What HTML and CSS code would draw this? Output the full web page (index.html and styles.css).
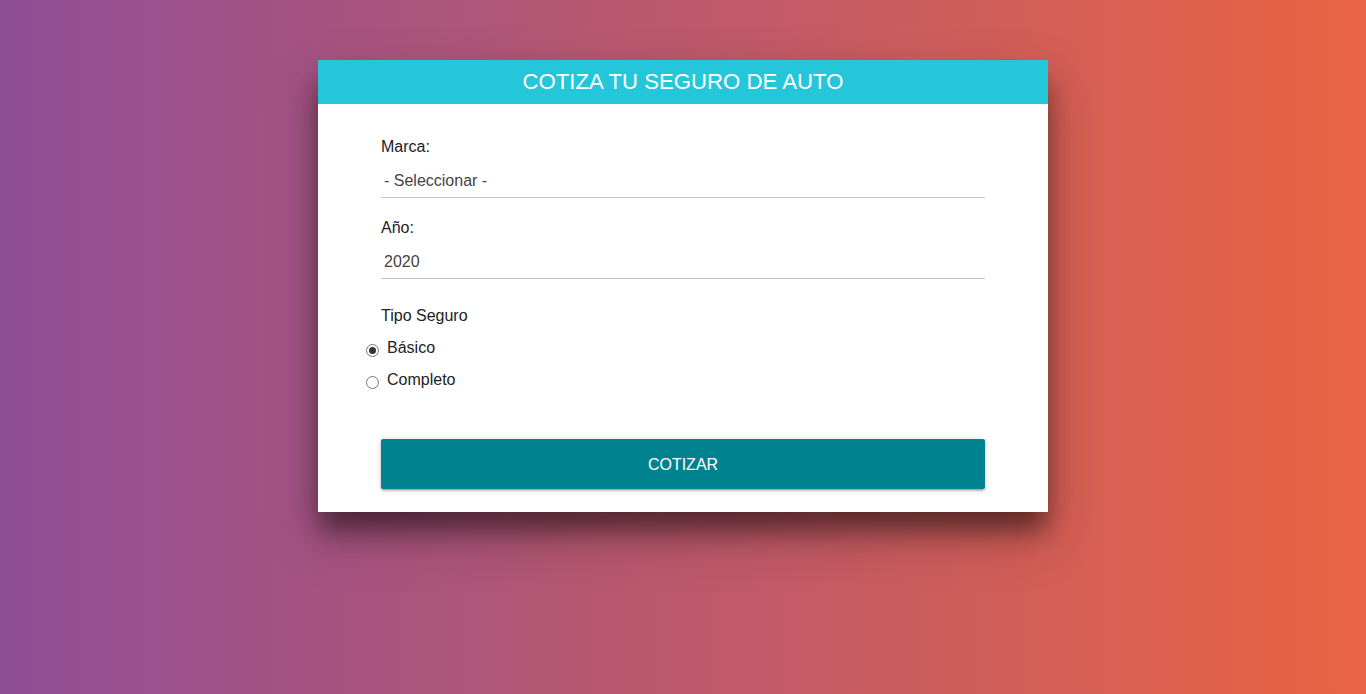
FILE: index.html
```html
<!DOCTYPE html>
<html lang="es">
<head>
<meta charset="utf-8">
<title>Cotiza tu seguro de auto</title>
<link rel="stylesheet" href="styles.css">
</head>
<body>
<div class="page">
  <div class="card">
    <header class="card-header">Cotiza tu seguro de auto</header>
    <form class="form">
      <div class="field">
        <label class="label" for="marca">Marca:</label>
        <select class="control" id="marca">
          <option>- Seleccionar -</option>
        </select>
      </div>
      <div class="field">
        <label class="label" for="anio">Año:</label>
        <select class="control" id="anio">
          <option>2020</option>
        </select>
      </div>
      <div class="group">
        <span class="label">Tipo Seguro</span>
        <div class="radios">
          <label class="radio-row"><input class="radio" type="radio" name="tipo" checked> Básico</label>
          <label class="radio-row"><input class="radio" type="radio" name="tipo"> Completo</label>
        </div>
      </div>
      <button type="button" class="btn">Cotizar</button>
    </form>
  </div>
</div>
</body>
</html>
```

FILE: styles.css
```css
* { box-sizing: border-box; }
html, body { margin: 0; padding: 0; }
body {
  min-height: 100vh;
  background: linear-gradient(to right, #904e95, #e96443);
  font-family: "Liberation Sans", Arial, sans-serif;
  color: #222;
}
.page {
  display: flex;
  justify-content: center;
  padding-top: 60px;
  height: 694px;
}
.card {
  width: 730px;
  height: 452px;
  background: #fff;
  box-shadow: 0 20px 24px -2px rgba(0, 0, 0, 0.45), 0 24px 50px 4px rgba(0, 0, 0, 0.18);
}
.card-header {
  height: 44px;
  line-height: 44px;
  background: #26c6da;
  color: #fff;
  text-align: center;
  font-size: 22.2px;
  text-transform: uppercase;
}
.form {
  padding: 34px 63px 23px 63px;
  display: flex;
  flex-direction: column;
}
.field { display: flex; flex-direction: column; }
.field + .field { margin-top: 21px; }
.label {
  display: block;
  font-size: 16px;
  line-height: 18px;
  color: #222;
}
.control {
  appearance: none;
  -webkit-appearance: none;
  margin-top: 8px;
  height: 34px;
  width: 100%;
  border: none;
  border-bottom: 1px solid #c4c4c4;
  background: transparent;
  padding: 0 0 0 3px;
  font-family: "Liberation Sans", Arial, sans-serif;
  font-size: 16px;
  color: #444;
  outline: none;
}
.group { margin-top: 28px; }
.radios {
  margin-top: 7px;
  margin-left: -15px;
  display: flex;
  flex-direction: column;
}
.radio-row {
  display: flex;
  align-items: center;
  height: 32px;
  font-size: 16px;
  color: #222;
}
.radio {
  appearance: none;
  -webkit-appearance: none;
  width: 13px;
  height: 13px;
  margin: 4px 8px 0 0;
  border: 1px solid #777;
  border-radius: 50%;
  background: #fff;
  position: relative;
  flex: none;
}
.radio:checked::after {
  content: "";
  position: absolute;
  left: 2px;
  top: 2px;
  width: 7px;
  height: 7px;
  border-radius: 50%;
  background: #333;
}
.btn {
  margin-top: 43px;
  height: 50px;
  width: 100%;
  border: none;
  border-radius: 2px;
  padding-top: 2px;
  background: #00838f;
  color: #fff;
  font-family: "Liberation Sans", Arial, sans-serif;
  font-size: 16px;
  text-transform: uppercase;
  box-shadow: 0 2px 2px 0 rgba(0,0,0,.14), 0 3px 1px -2px rgba(0,0,0,.12), 0 1px 5px 0 rgba(0,0,0,.2);
  cursor: pointer;
}
```
